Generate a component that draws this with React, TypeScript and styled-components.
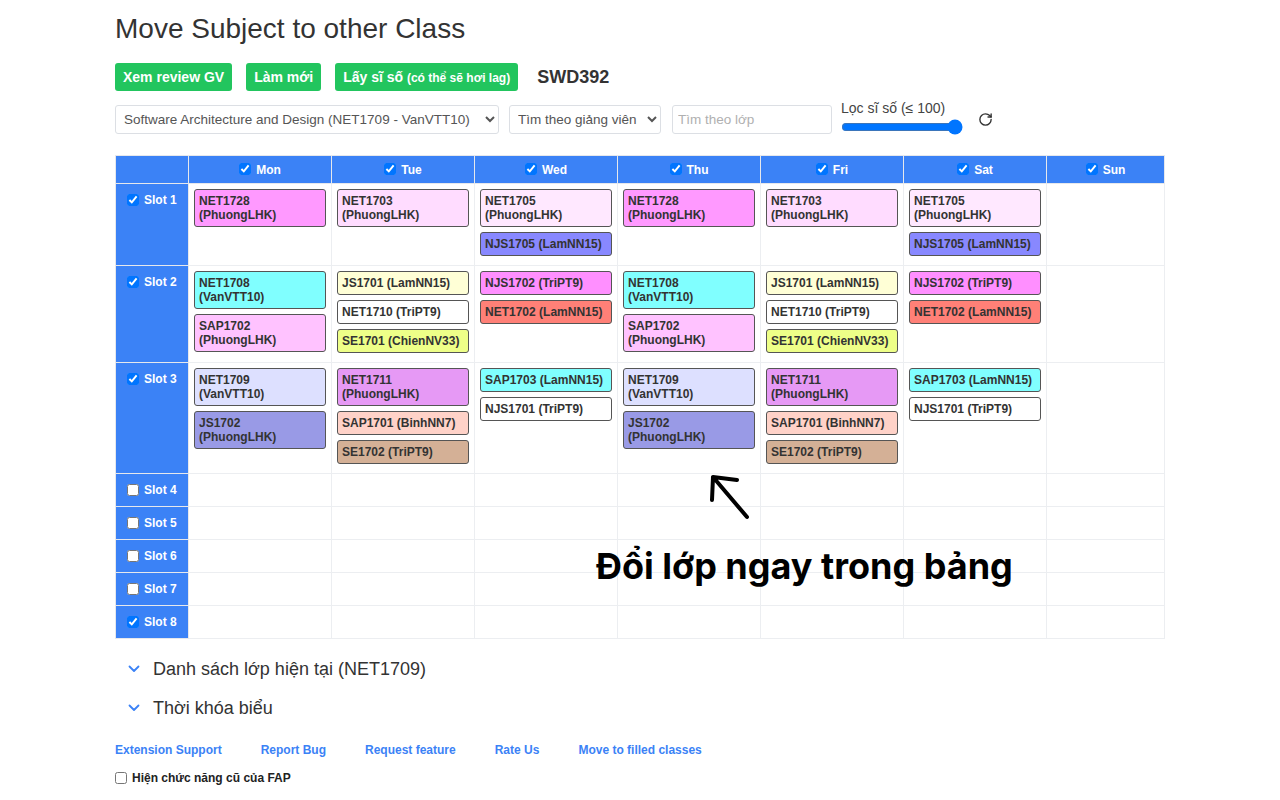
import styled, { createGlobalStyle } from "styled-components";
import { RotateCw } from "lucide-react";

const GlobalStyle = createGlobalStyle`
  body {
    margin: 0;
    background: #ffffff;
    font-family: "Liberation Sans", Arial, sans-serif;
    color: #333;
  }
`;

type Item = { code: string; teacher: string; color: string; wrap?: boolean };

const slot1A: Item[] = [{ code: "NET1728", teacher: "PhuongLHK", color: "#ff99ff", wrap: true }];
const slot2A: Item[] = [
  { code: "NET1708", teacher: "VanVTT10", color: "#80ffff", wrap: true },
  { code: "SAP1702", teacher: "PhuongLHK", color: "#ffc2ff", wrap: true },
];
const slot3A: Item[] = [
  { code: "NET1709", teacher: "VanVTT10", color: "#dde0ff", wrap: true },
  { code: "JS1702", teacher: "PhuongLHK", color: "#999ae6", wrap: true },
];
const slot1B: Item[] = [{ code: "NET1703", teacher: "PhuongLHK", color: "#ffdcff", wrap: true }];
const slot2B: Item[] = [
  { code: "JS1701", teacher: "LamNN15", color: "#ffffd6" },
  { code: "NET1710", teacher: "TriPT9", color: "#ffffff" },
  { code: "SE1701", teacher: "ChienNV33", color: "#eeff88" },
];
const slot3B: Item[] = [
  { code: "NET1711", teacher: "PhuongLHK", color: "#e699f5", wrap: true },
  { code: "SAP1701", teacher: "BinhNN7", color: "#ffd2c8" },
  { code: "SE1702", teacher: "TriPT9", color: "#d4b096" },
];
const slot1C: Item[] = [
  { code: "NET1705", teacher: "PhuongLHK", color: "#ffe8ff", wrap: true },
  { code: "NJS1705", teacher: "LamNN15", color: "#8888ff" },
];
const slot2C: Item[] = [
  { code: "NJS1702", teacher: "TriPT9", color: "#ff8fff" },
  { code: "NET1702", teacher: "LamNN15", color: "#ff8077" },
];
const slot3C: Item[] = [
  { code: "SAP1703", teacher: "LamNN15", color: "#80ffff" },
  { code: "NJS1701", teacher: "TriPT9", color: "#ffffff" },
];

const days = ["Mon", "Tue", "Wed", "Thu", "Fri", "Sat", "Sun"];

// schedule[slot][day]
const schedule: Item[][][] = [
  [slot1A, slot1B, slot1C, slot1A, slot1B, slot1C, []],
  [slot2A, slot2B, slot2C, slot2A, slot2B, slot2C, []],
  [slot3A, slot3B, slot3C, slot3A, slot3B, slot3C, []],
  [[], [], [], [], [], [], []],
  [[], [], [], [], [], [], []],
  [[], [], [], [], [], [], []],
  [[], [], [], [], [], [], []],
  [[], [], [], [], [], [], []],
];

const slotChecked = [true, true, true, false, false, false, false, true];

const App = () => {
  return (
    <>
      <GlobalStyle />
      <Page>
        <Title>Move Subject to other Class</Title>

        <ButtonRow>
          <GreenButton>Xem review GV</GreenButton>
          <GreenButton>Làm mới</GreenButton>
          <GreenButton>
            Lấy sĩ số <Small>(có thể sẽ hơi lag)</Small>
          </GreenButton>
          <SubjectCode>SWD392</SubjectCode>
        </ButtonRow>

        <FilterRow>
          <Select $width={384} defaultValue="a">
            <option value="a">Software Architecture and Design (NET1709 - VanVTT10)</option>
          </Select>
          <Select $width={152} defaultValue="b">
            <option value="b">Tìm theo giảng viên</option>
          </Select>
          <TextInput placeholder="Tìm theo lớp" />
          <RangeGroup>
            <RangeLabel>Lọc sĩ số (≤ 100)</RangeLabel>
            <Range type="range" min={0} max={100} defaultValue={100} />
          </RangeGroup>
          <IconButton>
            <RotateCw size={15} strokeWidth={2.2} />
          </IconButton>
        </FilterRow>

        <Table>
          <colgroup>
            <col style={{ width: 73 }} />
            {days.slice(0, 6).map((d) => (
              <col key={d} style={{ width: 143 }} />
            ))}
            <col />
          </colgroup>
          <thead>
            <tr>
              <HeadCell />
              {days.map((d) => (
                <HeadCell key={d}>
                  <Check type="checkbox" defaultChecked />
                  {d}
                </HeadCell>
              ))}
            </tr>
          </thead>
          <tbody>
            {schedule.map((row, i) => (
              <tr key={i}>
                <SlotCell>
                  <SlotLabel>
                    <Check type="checkbox" defaultChecked={slotChecked[i]} />
                    Slot {i + 1}
                  </SlotLabel>
                </SlotCell>
                {row.map((items, j) => (
                  <DayCell key={j}>
                    {items.map((it) => (
                      <ClassCard key={it.code} $bg={it.color}>
                        {it.code}
                        {it.wrap ? <br /> : " "}({it.teacher})
                      </ClassCard>
                    ))}
                  </DayCell>
                ))}
              </tr>
            ))}
          </tbody>
        </Table>

        <Accordion>
          <AccordionHeader>
            <Chevron />
            Danh sách lớp hiện tại (NET1709)
          </AccordionHeader>
          <AccordionHeader>
            <Chevron />
            Thời khóa biểu
          </AccordionHeader>
        </Accordion>

        <LinkRow>
          <FooterLink href="#">Extension Support</FooterLink>
          <FooterLink href="#">Report Bug</FooterLink>
          <FooterLink href="#">Request feature</FooterLink>
          <FooterLink href="#">Rate Us</FooterLink>
          <FooterLink href="#">Move to filled classes</FooterLink>
        </LinkRow>

        <OldFeature>
          <SmallCheck type="checkbox" />
          Hiện chức năng cũ của FAP
        </OldFeature>

        <Arrow width="56" height="56" viewBox="0 0 56 56">
          <path
            d="M13 8 L47 48 M13 8 L12 31 M13 8 L37 11"
            stroke="#000"
            strokeWidth="4"
            strokeLinecap="round"
            fill="none"
          />
        </Arrow>
        <Annotation>Đổi lớp ngay trong bảng</Annotation>
      </Page>
    </>
  );
};

const Chevron = () => (
  <ChevronSvg width="12" height="8" viewBox="0 0 12 8">
    <path d="M1.5 1.5 L6 6 L10.5 1.5" stroke="#3b82f6" strokeWidth="1.8" fill="none" strokeLinecap="round" strokeLinejoin="round" />
  </ChevronSvg>
);

const Page = styled.div`
  position: relative;
  width: 1050px;
  margin: 0 auto;
  padding: 13px 0 20px;
`;

const Title = styled.h1`
  margin: 0;
  font-size: 28px;
  line-height: 32px;
  font-weight: 400;
  color: #333;
`;

const ButtonRow = styled.div`
  display: flex;
  align-items: center;
  gap: 14px;
  margin-top: 18px;
`;

const GreenButton = styled.button`
  height: 28px;
  padding: 0 8px;
  border: none;
  border-radius: 3px;
  background: #22c55e;
  color: #fff;
  font-family: "Liberation Sans", Arial, sans-serif;
  font-size: 14px;
  font-weight: 700;
  cursor: pointer;
`;

const Small = styled.span`
  font-size: 12px;
`;

const SubjectCode = styled.span`
  font-size: 18px;
  font-weight: 700;
  color: #333;
  margin-left: 5px;
`;

const FilterRow = styled.div`
  display: flex;
  align-items: center;
  margin-top: 10px;
  height: 36px;
`;

const Select = styled.select<{ $width: number }>`
  width: ${(p) => p.$width}px;
  height: 29px;
  margin-right: 10px;
  padding: 0 4px;
  border: 1px solid #dcdfe4;
  border-radius: 3px;
  background: #fff;
  font-family: "Liberation Sans", Arial, sans-serif;
  font-size: 13.5px;
  color: #555;
`;

const TextInput = styled.input`
  width: 160px;
  height: 29px;
  box-sizing: border-box;
  margin-left: 1px;
  margin-right: 9px;
  padding: 0 5px;
  border: 1px solid #dcdfe4;
  border-radius: 3px;
  font-family: "Liberation Sans", Arial, sans-serif;
  font-size: 13.5px;
  &::placeholder {
    color: #b0b0b0;
  }
`;

const RangeGroup = styled.div`
  display: flex;
  flex-direction: column;
  width: 122px;
  margin-top: -4px;
`;

const RangeLabel = styled.span`
  font-size: 14px;
  line-height: 16px;
  color: #444;
`;

const Range = styled.input`
  width: 122px;
  margin: 3px 0 0;
  accent-color: #0075ff;
`;

const IconButton = styled.span`
  display: flex;
  align-items: center;
  margin-left: 15px;
  color: #333;
`;

const Table = styled.table`
  width: 1050px;
  margin-top: 18px;
  border-collapse: collapse;
  table-layout: fixed;
  font-size: 12px;
`;

const HeadCell = styled.th`
  height: 27px;
  padding: 0;
  background: #3b82f6;
  border: 1px solid #e6e8ec;
  color: #fff;
  font-size: 12px;
  font-weight: 700;
  text-align: center;
  vertical-align: middle;
`;

const Check = styled.input`
  width: 12px;
  height: 12px;
  margin: 0 5px 0 0;
  vertical-align: -1px;
`;

const SlotCell = styled.td`
  background: #3b82f6;
  border: 1px solid #e6e8ec;
  padding: 9px 0 9px 11px;
  vertical-align: top;
`;

const SlotLabel = styled.label`
  display: flex;
  align-items: center;
  height: 14px;
  color: #fff;
  font-weight: 700;
  font-size: 12px;
  white-space: nowrap;
`;

const DayCell = styled.td`
  border: 1px solid #eceef1;
  padding: 5px 5px 4px 5px;
  vertical-align: top;
`;

const ClassCard = styled.div<{ $bg: string }>`
  margin-bottom: 5px;
  padding: 4px 4px;
  border: 1px solid #555;
  border-radius: 3px;
  background: ${(p) => p.$bg};
  color: #333;
  font-weight: 700;
  font-size: 12px;
  line-height: 14px;
  white-space: nowrap;
  cursor: pointer;
`;

const Accordion = styled.div`
  margin-top: 10px;
`;

const AccordionHeader = styled.div`
  display: flex;
  align-items: center;
  gap: 13px;
  padding: 8px 0 7px 13px;
  font-size: 18px;
  line-height: 24px;
  color: #333;
`;

const ChevronSvg = styled.svg`
  flex: none;
`;

const LinkRow = styled.div`
  display: flex;
  gap: 39px;
  margin-top: 16px;
`;

const FooterLink = styled.a`
  color: #3b82f6;
  font-size: 12px;
  font-weight: 700;
  line-height: 15px;
  text-decoration: none;
`;

const OldFeature = styled.label`
  display: flex;
  align-items: center;
  margin-top: 13px;
  font-size: 12px;
  font-weight: 700;
  color: #222;
`;

const SmallCheck = styled.input`
  width: 12px;
  height: 12px;
  margin: 0 5px 0 0;
`;

const Arrow = styled.svg`
  position: absolute;
  left: 585px;
  top: 469px;
`;

const Annotation = styled.div`
  position: absolute;
  left: 481px;
  top: 544px;
  font-family: Inter, "Noto Sans", sans-serif;
  font-size: 36px;
  line-height: 44px;
  font-weight: 700;
  color: #000;
  white-space: nowrap;
`;

export default App;
